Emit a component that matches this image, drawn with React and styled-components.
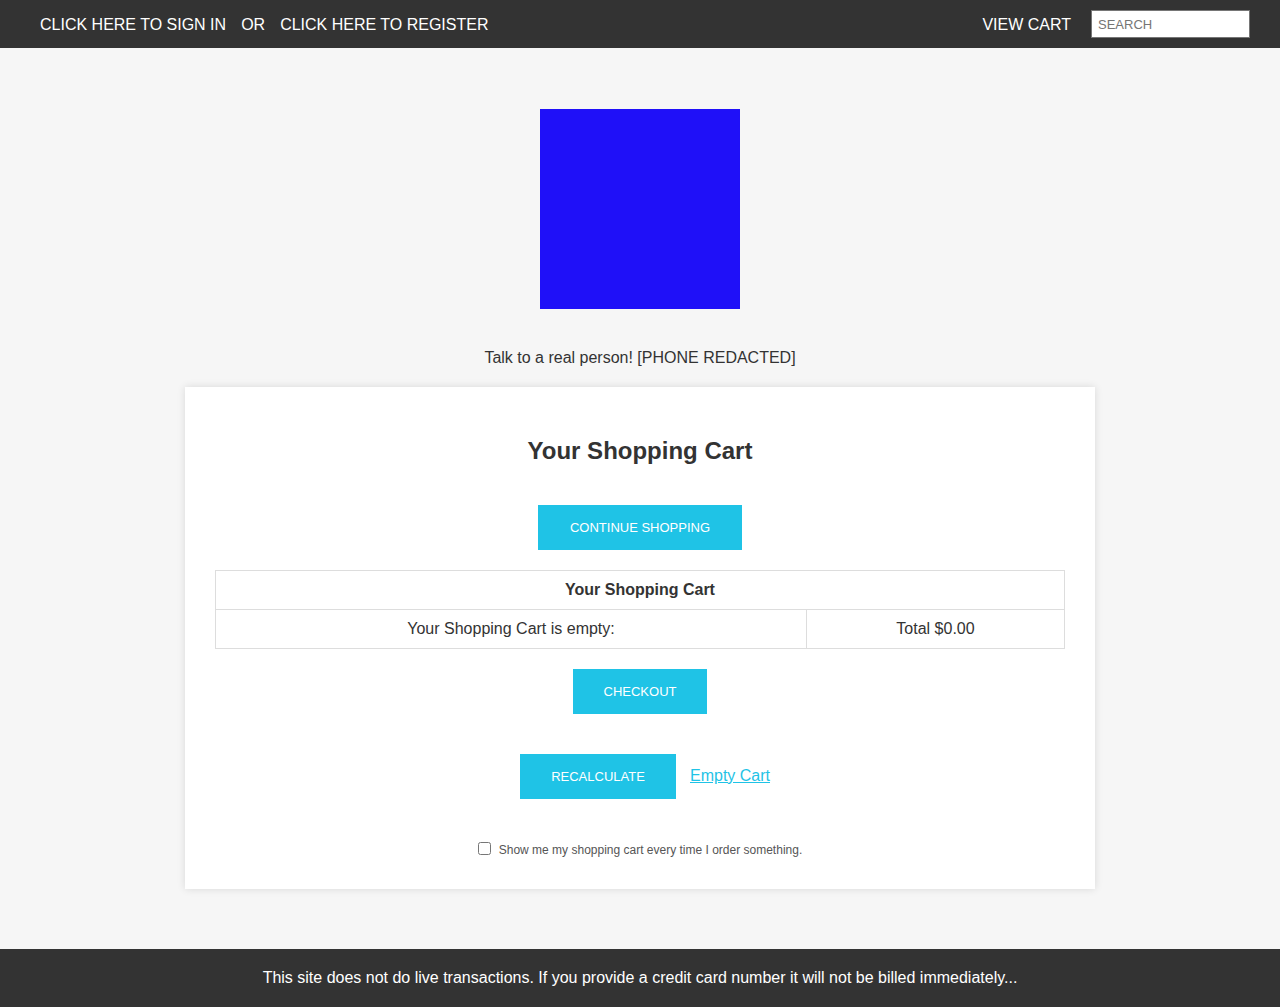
import React, { useState } from 'react';
import styled, { createGlobalStyle } from 'styled-components';

const GlobalStyle = createGlobalStyle`
  html, body {
    margin: 0;
    padding: 0;
    background: #f6f6f6;
    font-family: "Liberation Sans", Arial, sans-serif;
    color: #333;
  }
`;

const App = () => {
  const [showCart, setShowCart] = useState(false);

  return (
    <>
      <GlobalStyle />
      <TopBar>
        <NavGroup>
          <NavLink href="#">Click here to sign in</NavLink>
          <NavText>or</NavText>
          <NavLink href="#">Click here to register</NavLink>
        </NavGroup>
        <NavGroup>
          <NavLink href="#">View cart</NavLink>
          <SearchInput type="text" placeholder="SEARCH" />
        </NavGroup>
      </TopBar>

      <Main>
        <Logo />
        <Phone>Talk to a real person! [PHONE REDACTED]</Phone>

        <Card>
          <Title>Your Shopping Cart</Title>
          <Button>Continue Shopping</Button>

          <CartTable>
            <thead>
              <tr>
                <HeadCell colSpan={2}>Your Shopping Cart</HeadCell>
              </tr>
            </thead>
            <tbody>
              <tr>
                <Cell>Your Shopping Cart is empty:</Cell>
                <Cell width="257">Total $0.00</Cell>
              </tr>
            </tbody>
          </CartTable>

          <Button wide={134} $mt={20}>Checkout</Button>

          <ActionRow>
            <Button wide={156} $mt={0}>Recalculate</Button>
            <EmptyLink href="#">Empty Cart</EmptyLink>
          </ActionRow>

          <CheckRow>
            <input
              type="checkbox"
              checked={showCart}
              onChange={(e) => setShowCart(e.target.checked)}
            />
            Show me my shopping cart every time I order something.
          </CheckRow>
        </Card>
      </Main>

      <Footer>
        This site does not do live transactions. If you provide a credit card number it will not be billed immediately...
      </Footer>
    </>
  );
};

export default App;

const TopBar = styled.header`
  height: 48px;
  box-sizing: border-box;
  background: #333;
  display: flex;
  align-items: center;
  justify-content: space-between;
  padding: 0 30px 0 40px;
`;

const NavGroup = styled.div`
  display: flex;
  align-items: center;
  gap: 15px;
  &:last-child {
    gap: 20px;
  }
`;

const NavLink = styled.a`
  color: #fff;
  font-size: 16px;
  padding-top: 2px;
  text-transform: uppercase;
  text-decoration: none;
`;

const NavText = styled.span`
  color: #fff;
  font-size: 16px;
  padding-top: 2px;
  text-transform: uppercase;
`;

const SearchInput = styled.input`
  width: 159px;
  height: 28px;
  box-sizing: border-box;
  border: 1px solid #767676;
  padding: 2px 6px;
  font-family: "Liberation Sans", Arial, sans-serif;
  font-size: 13px;
  background: #fff;
  &::placeholder {
    color: #757575;
  }
`;

const Main = styled.main`
  display: flex;
  flex-direction: column;
  align-items: center;
  padding: 61px 0 60px;
`;

const Logo = styled.div`
  width: 200px;
  height: 200px;
  background: #1f10f8;
`;

const Phone = styled.p`
  margin: 40px 0 0;
  font-size: 16px;
  line-height: 18px;
  color: #333;
`;

const Card = styled.section`
  width: 910px;
  box-sizing: border-box;
  margin-top: 20px;
  background: #fff;
  box-shadow: 0 0 8px rgba(0, 0, 0, 0.12);
  padding: 50px 30px 32px;
  display: flex;
  flex-direction: column;
  align-items: center;
`;

const Title = styled.h2`
  margin: 0;
  font-size: 24px;
  line-height: 28px;
  font-weight: bold;
  color: #333;
`;

const Button = styled.button`
  width: ${(p) => p.wide || 204}px;
  height: 45px;
  margin-top: ${(p) => (p.$mt !== undefined ? p.$mt : 40)}px;
  border: none;
  background: #1fc3e6;
  color: #fff;
  font-family: "Liberation Sans", Arial, sans-serif;
  font-size: 13px;
  text-transform: uppercase;
  cursor: pointer;
`;

const CartTable = styled.table`
  width: 100%;
  margin-top: 20px;
  border-collapse: collapse;
  font-size: 16px;
  color: #333;
`;

const HeadCell = styled.th`
  border: 1px solid #ddd;
  height: 38px;
  padding: 0;
  font-size: 16px;
  font-weight: bold;
  text-align: center;
`;

const Cell = styled.td`
  border: 1px solid #ddd;
  height: 38px;
  padding: 0;
  text-align: center;
`;

const ActionRow = styled.div`
  display: flex;
  align-items: center;
  gap: 14px;
  margin-top: 40px;
  padding-left: 10px;
`;

const EmptyLink = styled.a`
  color: #1fc3e6;
  font-size: 16px;
  text-decoration: underline;
  padding-bottom: 2px;
`;

const CheckRow = styled.label`
  display: flex;
  align-items: center;
  gap: 4px;
  margin-top: 43px;
  font-size: 12px;
  line-height: 14px;
  color: #555;
  input {
    margin: 0 4px 2px 0;
    width: 13px;
    height: 13px;
  }
`;

const Footer = styled.footer`
  height: 58px;
  background: #333;
  color: #fff;
  font-size: 16px;
  display: flex;
  align-items: center;
  justify-content: center;
`;
